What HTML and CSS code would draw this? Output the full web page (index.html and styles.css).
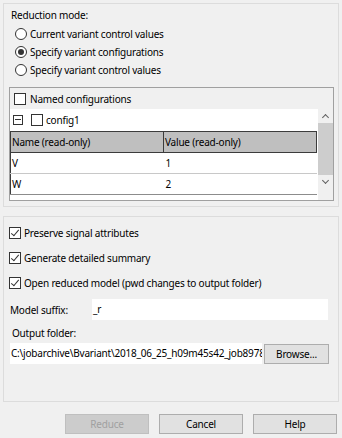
FILE: index.html
```html
<!DOCTYPE html>
<html lang="en">
<head>
    <meta charset="UTF-8">
    <meta name="viewport" content="width=device-width, initial-scale=1.0">
    <title>Reduce Model</title>
    <link rel="stylesheet" href="styles.css">
</head>
<body>

<div class="panel panel-top">
    <div class="mode-label">Reduction mode:</div>
    <label class="radio-row"><span class="radio"></span>Current variant control values</label>
    <label class="radio-row"><span class="radio checked"></span>Specify variant configurations</label>
    <label class="radio-row"><span class="radio"></span>Specify variant control values</label>

    <div class="group">
        <label class="group-head"><span class="check"></span>Named configurations</label>
        <div class="group-body">
            <div class="tree">
                <div class="tree-row">
                    <span class="collapse"></span>
                    <span class="check"></span>
                    <span>config1</span>
                </div>
                <table class="values">
                    <tr>
                        <th>Name (read-only)</th>
                        <th>Value (read-only)</th>
                    </tr>
                    <tr>
                        <td>V</td>
                        <td>1</td>
                    </tr>
                    <tr>
                        <td>W</td>
                        <td>2</td>
                    </tr>
                </table>
            </div>
            <div class="scrollbar">
                <span class="arrow up"></span>
                <span class="thumb"></span>
                <span class="arrow down"></span>
            </div>
        </div>
    </div>
</div>

<div class="panel panel-bottom">
    <label class="check-row"><span class="check on"></span>Preserve signal attributes</label>
    <label class="check-row"><span class="check on"></span>Generate detailed summary</label>
    <label class="check-row"><span class="check on"></span>Open reduced model (pwd changes to output folder)</label>

    <div class="suffix-row">
        <span class="suffix-label">Model suffix:</span>
        <div class="field suffix-field">_r</div>
    </div>

    <div class="folder-label">Output folder:</div>
    <div class="folder-row">
        <div class="field folder-field">C:\jobarchive\Bvariant\2018_06_25_h09m45s42_job8978</div>
        <button class="btn browse">Browse...</button>
    </div>
</div>

<div class="actions">
    <button class="btn disabled">Reduce</button>
    <button class="btn">Cancel</button>
    <button class="btn">Help</button>
</div>

</body>
</html>
```

FILE: styles.css
```css
body {
    margin: 0;
    background: #f0f0f0;
    font-family: "Noto Sans", "Open Sans", sans-serif;
    font-size: 10px;
    letter-spacing: -0.2px;
    color: #000000;
}
.panel {
    box-sizing: border-box;
    width: 336px;
    margin-left: 3px;
    border: 1px solid #dcdcdc;
}
.panel-top {
    margin-top: 3px;
    height: 204px;
    padding-top: 2px;
}
.mode-label {
    height: 18px;
    line-height: 18px;
    padding-left: 7px;
}
.radio-row {
    display: flex;
    align-items: center;
    height: 18px;
    padding-left: 11px;
    margin-top: 1px;
}
.radio-row + .radio-row {
    margin-top: 0;
}
.radio {
    box-sizing: border-box;
    width: 12px;
    height: 12px;
    margin-right: 3px;
    border: 1px solid #333333;
    border-radius: 50%;
    background: #ffffff;
    position: relative;
}
.radio.checked::after {
    content: "";
    position: absolute;
    left: 2px;
    top: 2px;
    width: 6px;
    height: 6px;
    border-radius: 50%;
    background: #333333;
}
.check {
    box-sizing: border-box;
    width: 12px;
    height: 12px;
    border: 1px solid #333333;
    background: #ffffff;
    position: relative;
    flex: none;
}
.check.on::after {
    content: "";
    position: absolute;
    left: 3px;
    top: 0px;
    width: 3px;
    height: 7px;
    border: solid #333333;
    border-width: 0 1px 1px 0;
    transform: rotate(40deg);
}
.group {
    box-sizing: border-box;
    margin: 8px 0 0 5px;
    width: 325px;
    height: 114px;
    border: 1px solid #a0a0a0;
}
.group-head {
    display: flex;
    align-items: center;
    gap: 4px;
    height: 21px;
    padding-left: 4px;
}
.group-body {
    display: flex;
    height: 91px;
}
.tree {
    flex: 1;
    background: #ffffff;
}
.tree-row {
    display: flex;
    align-items: center;
    height: 22px;
    padding-left: 3px;
}
.collapse {
    box-sizing: border-box;
    width: 10px;
    height: 10px;
    border: 1px solid #333333;
    margin-right: 8px;
    position: relative;
}
.collapse::after {
    content: "";
    position: absolute;
    left: 1px;
    top: 3px;
    width: 6px;
    height: 1px;
    background: #333333;
}
.tree-row .check {
    margin-right: 3px;
}
.values {
    border-collapse: collapse;
    width: 307px;
}
.values th,
.values td {
    text-align: left;
    font-weight: normal;
    height: 21px;
    padding: 0 0 0 1px;
    box-sizing: border-box;
}
.values th {
    background: #bfbfbf;
    border: 1px solid #3c3c3c;
}
.values th:first-child {
    width: 153px;
}
.values td {
    border-bottom: 1px solid #c8c8c8;
    border-left: 1px solid #3c3c3c;
}
.values td + td {
    border-left: none;
    padding-left: 2px;
}
.values tr:last-child td {
    border-bottom-color: #8c8c8c;
}
.scrollbar {
    width: 15px;
    display: flex;
    flex-direction: column;
    align-items: center;
    background: #f0f0f0;
}
.arrow {
    height: 14px;
    width: 15px;
    position: relative;
}
.arrow::after {
    content: "";
    position: absolute;
    left: 5px;
    width: 4px;
    height: 4px;
    border: solid #606060;
    border-width: 1px 0 0 1px;
}
.arrow.up::after {
    top: 6px;
    transform: rotate(45deg);
}
.arrow.down::after {
    top: 3px;
    transform: rotate(225deg);
}
.thumb {
    width: 15px;
    height: 52px;
    background: #cdcdcd;
}
.panel-bottom {
    margin-top: 9px;
    height: 186px;
    padding-top: 3px;
}
.check-row {
    display: flex;
    align-items: center;
    gap: 3px;
    height: 25px;
    padding-left: 5px;
}
.suffix-row {
    display: flex;
    align-items: center;
    margin-top: 4px;
    padding-left: 6px;
}
.suffix-label {
    width: 82px;
}
.field {
    box-sizing: border-box;
    height: 21px;
    line-height: 21px;
    background: #ffffff;
    padding-left: 1px;
    white-space: nowrap;
    overflow: hidden;
}
.suffix-field {
    width: 236px;
}
.folder-label {
    height: 20px;
    line-height: 20px;
    margin-top: 3px;
    padding-left: 8px;
}
.folder-row {
    display: flex;
    align-items: center;
    gap: 2px;
    padding-left: 6px;
}
.folder-field {
    width: 252px;
}
.btn {
    box-sizing: border-box;
    font-family: inherit;
    font-size: inherit;
    letter-spacing: inherit;
    background: #e1e1e1;
    border: 1px solid #adadad;
    padding: 0;
    color: #000000;
}
.browse {
    width: 65px;
    height: 20px;
}
.actions {
    display: flex;
    justify-content: flex-end;
    gap: 10px;
    width: 337px;
    margin-top: 12px;
}
.actions .btn {
    width: 84px;
    height: 20px;
}
.actions .btn.disabled {
    background: #cccccc;
    border-color: #bfbfbf;
    color: #a0a0a0;
}
```
